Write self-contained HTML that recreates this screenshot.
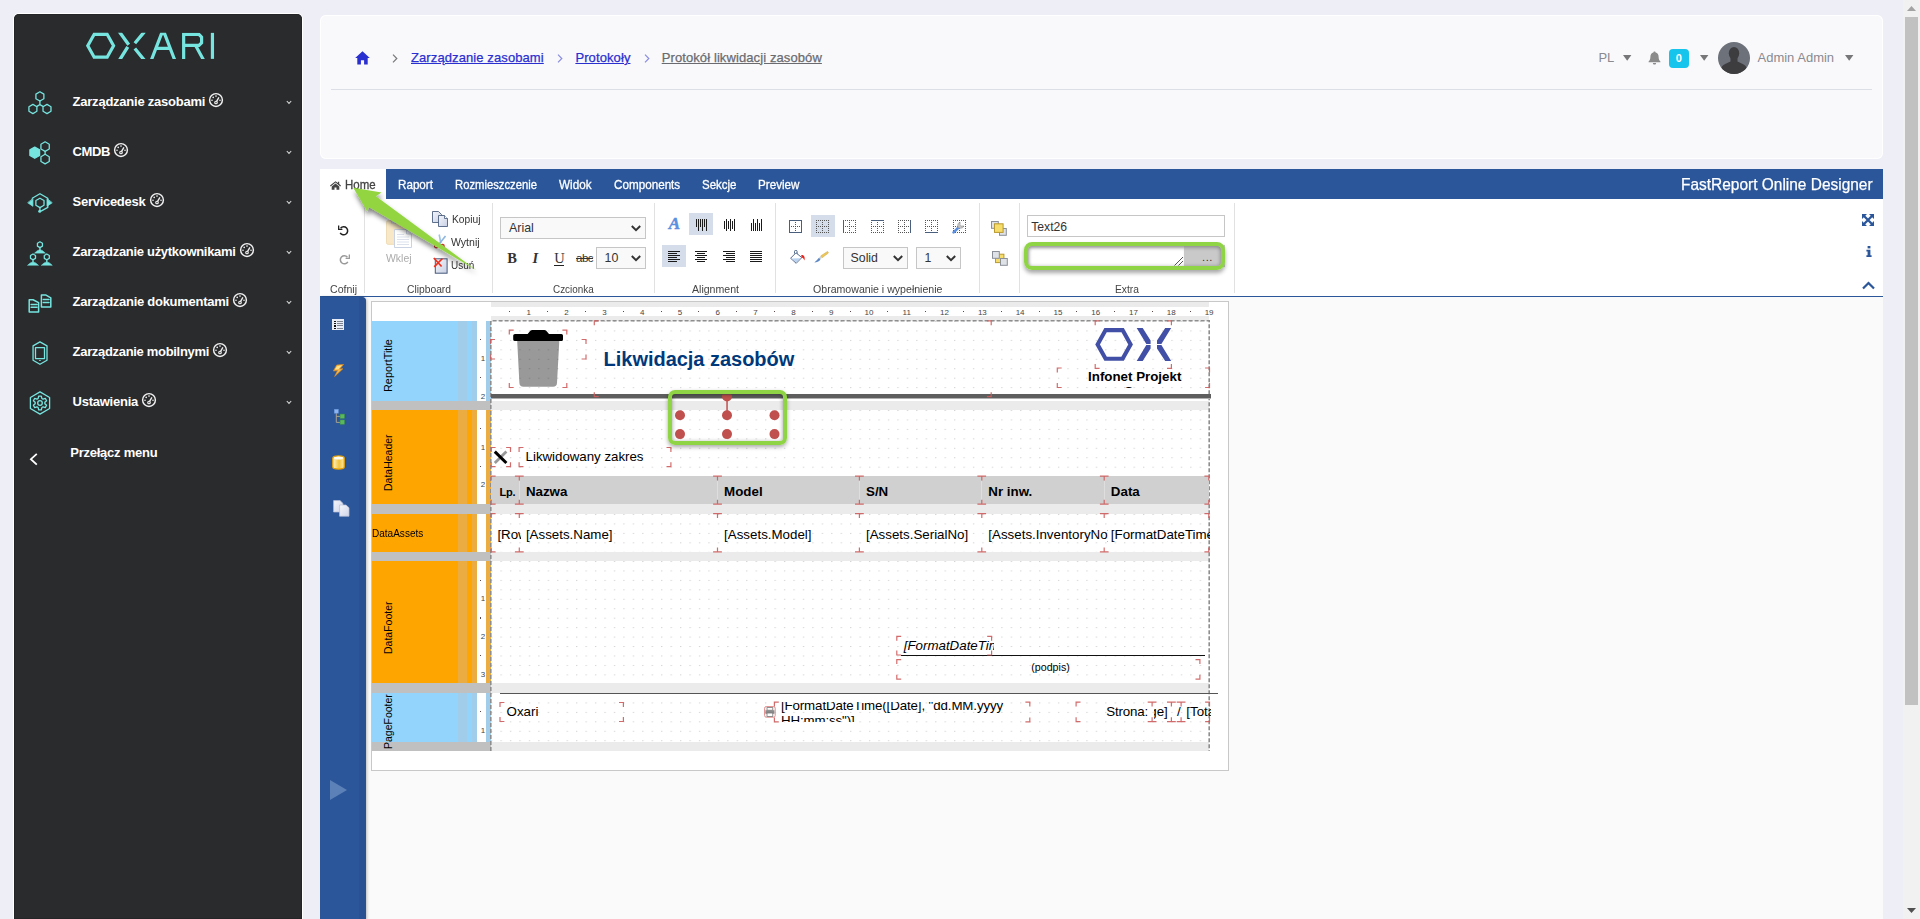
<!DOCTYPE html>
<html lang="pl">
<head>
<meta charset="utf-8">
<title>Oxari - FastReport Online Designer</title>
<style>
*{box-sizing:border-box;margin:0;padding:0}
html,body{width:1920px;height:919px;overflow:hidden;background:#eeeef7;font-family:"Liberation Sans",sans-serif;}
.abs{position:absolute}
/* ---------- sidebar ---------- */
#side{position:absolute;left:14px;top:14px;width:288px;height:905px;background:#2a2b2d;border-radius:5px 5px 0 0;box-shadow:0 0 0 1px #fff, inset 0 0 0 0.6px #1f2021}
.mi{position:absolute;left:0;width:288px;height:50px}
.mi .ic{position:absolute;left:12px;top:0}
.mi .tx{position:absolute;left:58.6px;top:0;color:#fff;font-weight:bold;font-size:13px;letter-spacing:-0.23px;white-space:nowrap;line-height:16px}
.tx2{position:absolute;left:56.2px;top:430.7px;color:#fff;font-weight:bold;font-size:13px;letter-spacing:-0.23px;white-space:nowrap;line-height:16px}
.mi .gg{position:absolute;top:0}
.mi .cv{position:absolute;left:272.2px;top:0}
/* ---------- top card ---------- */
#card{position:absolute;left:320px;top:15px;width:1563px;height:144.2px;background:#f9f9fb;border-radius:6px;box-shadow:inset 0 0 0 1px #fff}
#card .hr{position:absolute;left:11px;top:74px;width:1541px;height:1px;background:#dcdfe6}
.bc{position:absolute;top:34.7px;font-size:13px;line-height:16px;white-space:nowrap;letter-spacing:0.1px;text-decoration:underline;-webkit-text-stroke:0.25px currentColor}
.ut{position:absolute;top:34.5px;font-size:13px;line-height:16px;white-space:nowrap;color:#8a8a90}
.bc.l{color:#2a2fd0}
.bc.g{color:#6a6b70}
/* ---------- scrollbar ---------- */
#sb{position:absolute;left:1903px;top:0;width:17px;height:919px;background:#f1f1f1}
#sb .th{position:absolute;left:2px;top:17px;width:13px;height:688px;background:#c1c1c1}
/* ---------- designer ---------- */
#des{position:absolute;left:320px;top:169px;width:1563px;height:750px;background:#fafafa;overflow:hidden}
#tabs{position:absolute;left:0;top:0;width:1563px;height:30px;background:#2b579a}
#tabs .home{position:absolute;left:0;top:0;width:66px;height:30px;background:#fff}
.tb{position:absolute;top:8.6px;font-size:12.6px;line-height:14px;color:#fff;white-space:nowrap;transform-origin:0 50%;-webkit-text-stroke:0.3px currentColor}
#rib{position:absolute;left:0;top:30px;width:1563px;height:98px;background:#fff;border-bottom:1px solid #2b579a}
.sep{position:absolute;top:4px;width:1px;height:90px;background:#e1e1e1}
.gl{position:absolute;top:84px;font-size:11px;line-height:12px;color:#444;white-space:nowrap;transform-origin:0 50%}
.rl{position:absolute;font-size:11px;line-height:12px;color:#333;white-space:nowrap;transform-origin:0 50%}
.sel{position:absolute;border:1px solid #c6c6c6;background:#f9f9f9}
.sel span{position:absolute;line-height:14px;color:#333;white-space:nowrap}
.rn{position:absolute;width:16px;text-align:center;font-size:8px;line-height:9px;color:#444}
.vn{position:absolute;width:9px;text-align:center;font-size:8px;line-height:9px;color:#444}
.rd{position:absolute;width:1.1px;height:1.1px;background:#5a4a4a}
.bl{position:absolute;font-size:10.5px;line-height:12px;color:#000;white-space:nowrap}
.bl.v{transform-origin:0 0;transform:rotate(-90deg)}
.t{position:absolute;font-size:13.33px;line-height:16px;white-space:nowrap;color:#000}
#lp{position:absolute;left:0;top:128px;width:46px;height:623px;background:#2b579a;border-radius:0 5px 0 0;box-shadow:1px 0 3px rgba(0,0,0,.25)}
</style>
</head>
<body>
<!--SIDEBAR-->
<div id="side">
<svg class="abs" style="left:66px;top:11px" width="140" height="40" viewBox="0 0 1920 549" fill="none" stroke="#76e5e0" stroke-width="44"><polygon points="106,285 194,128 372,128 460,285 372,442 194,442"/><defs><clipPath id="lc"><rect x="0" y="108" width="1920" height="358"/></clipPath></defs><g clip-path="url(#lc)"><path d="M535 86 L668 272 M655 300 L537 489 M885 90 L752 250 M752 322 L885 486" stroke-width="46"/><path d="M968 509 L1118 118 H1160 L1310 509 M1050 322 H1232"/><path d="M1422 500 V130 H1632 L1668 166 V246 L1632 280 H1422 M1588 284 L1708 505"/></g><path d="M1817 108 V465"/></svg>
<div class="mi" style="top:62px"><svg class="ic" style="left:10px;top:10px" width="32" height="32" viewBox="0 0 32 32" fill="none" stroke="#76e5e0" stroke-width="1.3" stroke-linejoin="round" stroke-linecap="round"><polygon points="15.90,5.80 11.92,8.10 11.92,12.70 15.90,15.00 19.88,12.70 19.88,8.10"/><polygon points="8.90,18.40 4.92,20.70 4.92,25.30 8.90,27.60 12.88,25.30 12.88,20.70"/><polygon points="23.00,18.40 19.02,20.70 19.02,25.30 23.00,27.60 26.98,25.30 26.98,20.70"/><path d="M15.9 15 V18.6 M15.9 18.6 L12.9 20.4 M15.9 18.6 L19 20.4"/></svg><span class="tx" style="top:17.5px;letter-spacing:-0.234px">Zarządzanie zasobami</span><svg class="gg" width="16" height="16" viewBox="0 0 16 16" fill="none" stroke="#f2f2f2" stroke-width="1.45" style="left:194.3px;top:16px"><circle cx="8" cy="8" r="6.4"/><circle cx="8" cy="10.5" r="1.25" stroke-width="1.2"/><path d="M8.6 9.4 L10.9 5.4" stroke-width="1.35"/><g fill="#f2f2f2" stroke="none"><circle cx="8" cy="4.1" r="0.8"/><circle cx="5.2" cy="5.4" r="0.8"/><circle cx="4" cy="8.2" r="0.8"/><circle cx="12" cy="8.2" r="0.8"/></g></svg><svg class="cv" width="6" height="5" viewBox="0 0 6 5" fill="none" stroke="#d8d8d8" stroke-width="1.1" style="top:24.3px"><path d="M0.8 1 L3 3.4 L5.2 1"/></svg></div>
<div class="mi" style="top:112px"><svg class="ic" style="left:10px;top:10px" width="32" height="32" viewBox="0 0 32 32" fill="none" stroke="#76e5e0" stroke-width="1.3" stroke-linejoin="round" stroke-linecap="round"><polygon points="10.75,11.10 5.90,13.90 5.90,19.50 10.75,22.30 15.60,19.50 15.60,13.90" fill="#76e5e0"/><polygon points="21.10,5.80 16.94,8.20 16.94,13.00 21.10,15.40 25.26,13.00 25.26,8.20"/><polygon points="21.10,18.30 16.94,20.70 16.94,25.50 21.10,27.90 25.26,25.50 25.26,20.70"/><path d="M21.1 15.6 V18.1"/></svg><span class="tx" style="top:17.5px;letter-spacing:-0.425px">CMDB</span><svg class="gg" width="16" height="16" viewBox="0 0 16 16" fill="none" stroke="#f2f2f2" stroke-width="1.45" style="left:99.0px;top:16px"><circle cx="8" cy="8" r="6.4"/><circle cx="8" cy="10.5" r="1.25" stroke-width="1.2"/><path d="M8.6 9.4 L10.9 5.4" stroke-width="1.35"/><g fill="#f2f2f2" stroke="none"><circle cx="8" cy="4.1" r="0.8"/><circle cx="5.2" cy="5.4" r="0.8"/><circle cx="4" cy="8.2" r="0.8"/><circle cx="12" cy="8.2" r="0.8"/></g></svg><svg class="cv" width="6" height="5" viewBox="0 0 6 5" fill="none" stroke="#d8d8d8" stroke-width="1.1" style="top:24.3px"><path d="M0.8 1 L3 3.4 L5.2 1"/></svg></div>
<div class="mi" style="top:162px"><svg class="ic" style="left:10px;top:10px" width="32" height="32" viewBox="0 0 32 32" fill="none" stroke="#76e5e0" stroke-width="1.3" stroke-linejoin="round" stroke-linecap="round"><polygon points="15.95,12.20 11.88,14.55 11.88,19.25 15.95,21.60 20.02,19.25 20.02,14.55"/><path d="M8.2 12.2 L15.95 7.7 L23.8 12.2 V21.4 L17.5 24.9"/><path d="M8.9 12.9 V20.3 L4 16.9Z M23 12.9 V20.3 L27.9 16.9Z" fill="#76e5e0" stroke-width="0.8"/><path d="M15.95 21.7 V24.5"/><circle cx="15.7" cy="25.3" r="1.5" fill="#76e5e0" stroke="none"/></svg><span class="tx" style="top:17.5px;letter-spacing:-0.283px">Servicedesk</span><svg class="gg" width="16" height="16" viewBox="0 0 16 16" fill="none" stroke="#f2f2f2" stroke-width="1.45" style="left:134.5px;top:16px"><circle cx="8" cy="8" r="6.4"/><circle cx="8" cy="10.5" r="1.25" stroke-width="1.2"/><path d="M8.6 9.4 L10.9 5.4" stroke-width="1.35"/><g fill="#f2f2f2" stroke="none"><circle cx="8" cy="4.1" r="0.8"/><circle cx="5.2" cy="5.4" r="0.8"/><circle cx="4" cy="8.2" r="0.8"/><circle cx="12" cy="8.2" r="0.8"/></g></svg><svg class="cv" width="6" height="5" viewBox="0 0 6 5" fill="none" stroke="#d8d8d8" stroke-width="1.1" style="top:24.3px"><path d="M0.8 1 L3 3.4 L5.2 1"/></svg></div>
<div class="mi" style="top:212px"><svg class="ic" style="left:10px;top:10px" width="32" height="32" viewBox="0 0 32 32" fill="none" stroke="#76e5e0" stroke-width="1.3" stroke-linejoin="round" stroke-linecap="round"><polygon points="15.95,5.80 13.44,7.25 13.44,10.15 15.95,11.60 18.46,10.15 18.46,7.25"/><path d="M15.95 11.899999999999999 V13.7"/><path d="M10.75 16.9 Q13.45 13.899999999999999 15.95 13.7 Q18.45 13.899999999999999 21.15 16.9Z" fill="#76e5e0" stroke-width="0.6"/><polygon points="9.00,18.00 6.49,19.45 6.49,22.35 9.00,23.80 11.51,22.35 11.51,19.45"/><path d="M9.0 24.099999999999998 V25.9"/><path d="M3.8 29.099999999999998 Q6.5 26.099999999999998 9.0 25.9 Q11.5 26.099999999999998 14.2 29.099999999999998Z" fill="#76e5e0" stroke-width="0.6"/><polygon points="22.80,18.00 20.29,19.45 20.29,22.35 22.80,23.80 25.31,22.35 25.31,19.45"/><path d="M22.8 24.099999999999998 V25.9"/><path d="M17.6 29.099999999999998 Q20.3 26.099999999999998 22.8 25.9 Q25.3 26.099999999999998 28.0 29.099999999999998Z" fill="#76e5e0" stroke-width="0.6"/></svg><span class="tx" style="top:17.5px;letter-spacing:-0.300px">Zarządzanie użytkownikami</span><svg class="gg" width="16" height="16" viewBox="0 0 16 16" fill="none" stroke="#f2f2f2" stroke-width="1.45" style="left:224.7px;top:16px"><circle cx="8" cy="8" r="6.4"/><circle cx="8" cy="10.5" r="1.25" stroke-width="1.2"/><path d="M8.6 9.4 L10.9 5.4" stroke-width="1.35"/><g fill="#f2f2f2" stroke="none"><circle cx="8" cy="4.1" r="0.8"/><circle cx="5.2" cy="5.4" r="0.8"/><circle cx="4" cy="8.2" r="0.8"/><circle cx="12" cy="8.2" r="0.8"/></g></svg><svg class="cv" width="6" height="5" viewBox="0 0 6 5" fill="none" stroke="#d8d8d8" stroke-width="1.1" style="top:24.3px"><path d="M0.8 1 L3 3.4 L5.2 1"/></svg></div>
<div class="mi" style="top:262px"><svg class="ic" style="left:10px;top:10px" width="32" height="32" viewBox="0 0 32 32" fill="none" stroke="#76e5e0" stroke-width="1.3" stroke-linejoin="round" stroke-linecap="round"><path d="M17.4 8.9 H21.6 L26.8 11.8 V20.9 H17.4Z M19.3 13.6 H25 M19.3 16.4 H25" stroke-width="1.5"/><path d="M5.2 13.75 H9.05 L14.6 16.7 V25.9 H5.2Z M7.1 18.6 H13 M7.1 21.2 H13" stroke-width="1.5"/></svg><span class="tx" style="top:17.5px;letter-spacing:-0.276px">Zarządzanie dokumentami</span><svg class="gg" width="16" height="16" viewBox="0 0 16 16" fill="none" stroke="#f2f2f2" stroke-width="1.45" style="left:217.9px;top:16px"><circle cx="8" cy="8" r="6.4"/><circle cx="8" cy="10.5" r="1.25" stroke-width="1.2"/><path d="M8.6 9.4 L10.9 5.4" stroke-width="1.35"/><g fill="#f2f2f2" stroke="none"><circle cx="8" cy="4.1" r="0.8"/><circle cx="5.2" cy="5.4" r="0.8"/><circle cx="4" cy="8.2" r="0.8"/><circle cx="12" cy="8.2" r="0.8"/></g></svg><svg class="cv" width="6" height="5" viewBox="0 0 6 5" fill="none" stroke="#d8d8d8" stroke-width="1.1" style="top:24.3px"><path d="M0.8 1 L3 3.4 L5.2 1"/></svg></div>
<div class="mi" style="top:312px"><svg class="ic" style="left:10px;top:10px" width="32" height="32" viewBox="0 0 32 32" fill="none" stroke="#76e5e0" stroke-width="1.3" stroke-linejoin="round" stroke-linecap="round"><polygon points="15.95,5.9 23,9.9 23,24.3 15.95,28.3 9.05,24.3 9.05,9.9"/><rect x="11.5" y="11.7" width="9" height="10.9"/><ellipse cx="15.95" cy="24.5" rx="1" ry="0.5" fill="#76e5e0" stroke="none"/></svg><span class="tx" style="top:17.5px;letter-spacing:-0.317px">Zarządzanie mobilnymi</span><svg class="gg" width="16" height="16" viewBox="0 0 16 16" fill="none" stroke="#f2f2f2" stroke-width="1.45" style="left:198.1px;top:16px"><circle cx="8" cy="8" r="6.4"/><circle cx="8" cy="10.5" r="1.25" stroke-width="1.2"/><path d="M8.6 9.4 L10.9 5.4" stroke-width="1.35"/><g fill="#f2f2f2" stroke="none"><circle cx="8" cy="4.1" r="0.8"/><circle cx="5.2" cy="5.4" r="0.8"/><circle cx="4" cy="8.2" r="0.8"/><circle cx="12" cy="8.2" r="0.8"/></g></svg><svg class="cv" width="6" height="5" viewBox="0 0 6 5" fill="none" stroke="#d8d8d8" stroke-width="1.1" style="top:24.3px"><path d="M0.8 1 L3 3.4 L5.2 1"/></svg></div>
<div class="mi" style="top:362px"><svg class="ic" style="left:10px;top:10px" width="32" height="32" viewBox="0 0 32 32" fill="none" stroke="#76e5e0" stroke-width="1.3" stroke-linejoin="round" stroke-linecap="round"><polygon points="16.00,5.90 6.39,11.45 6.39,22.55 16.00,28.10 25.61,22.55 25.61,11.45"/><path d="M17.84 12.46 L17.34 10.13 L14.66 10.13 L14.16 12.46 L12.98 13.14 L10.72 12.41 L9.38 14.72 L11.15 16.32 L11.15 17.68 L9.38 19.28 L10.72 21.59 L12.98 20.86 L14.16 21.54 L14.66 23.87 L17.34 23.87 L17.84 21.54 L19.02 20.86 L21.28 21.59 L22.62 19.28 L20.85 17.68 L20.85 16.32 L22.62 14.72 L21.28 12.41 L19.02 13.14Z" stroke-width="1.3"/><circle cx="16" cy="17" r="2.3"/></svg><span class="tx" style="top:17.5px;letter-spacing:-0.252px">Ustawienia</span><svg class="gg" width="16" height="16" viewBox="0 0 16 16" fill="none" stroke="#f2f2f2" stroke-width="1.45" style="left:127.1px;top:16px"><circle cx="8" cy="8" r="6.4"/><circle cx="8" cy="10.5" r="1.25" stroke-width="1.2"/><path d="M8.6 9.4 L10.9 5.4" stroke-width="1.35"/><g fill="#f2f2f2" stroke="none"><circle cx="8" cy="4.1" r="0.8"/><circle cx="5.2" cy="5.4" r="0.8"/><circle cx="4" cy="8.2" r="0.8"/><circle cx="12" cy="8.2" r="0.8"/></g></svg><svg class="cv" width="6" height="5" viewBox="0 0 6 5" fill="none" stroke="#d8d8d8" stroke-width="1.1" style="top:24.3px"><path d="M0.8 1 L3 3.4 L5.2 1"/></svg></div>
<svg class="abs" style="left:14px;top:437px" width="12" height="16" viewBox="0 0 12 16" fill="none" stroke="#fff" stroke-width="1.8"><path d="M8.8 2.8 L2.9 8.2 L8.8 13.6"/></svg><span class="tx2">Przełącz menu</span>
</div>
<!--/SIDEBAR-->
<!--CARD-->
<div id="card">
<svg class="abs" style="left:34.5px;top:35.5px" width="15" height="14" viewBox="0 0 15 14"><path d="M7.5 0.3 L0.2 6.9 H2.3 V13.4 H5.9 V9.2 H9.1 V13.4 H12.7 V6.9 H14.8Z" fill="#2a2fd0"/></svg>
<svg class="abs" style="left:71.5px;top:38.5px" width="6" height="9" viewBox="0 0 6 9" fill="none" stroke="#77777c" stroke-width="1.2"><path d="M1 0.7 L4.8 4.5 L1 8.3"/></svg>
<span class="bc l" style="left:91px">Zarządzanie zasobami</span>
<svg class="abs" style="left:237px;top:38.5px" width="6" height="9" viewBox="0 0 6 9" fill="none" stroke="#8a8de0" stroke-width="1.2"><path d="M1 0.7 L4.8 4.5 L1 8.3"/></svg>
<span class="bc l" style="left:255.4px">Protokoły</span>
<svg class="abs" style="left:323.5px;top:38.5px" width="6" height="9" viewBox="0 0 6 9" fill="none" stroke="#8a8de0" stroke-width="1.2"><path d="M1 0.7 L4.8 4.5 L1 8.3"/></svg>
<span class="bc g" style="left:341.7px">Protokół likwidacji zasobów</span>
<div class="hr"></div>
<span class="ut" style="left:1278.4px">PL</span>
<svg class="abs" style="left:1303px;top:40px" width="9" height="6"><path d="M0 0 H8.4 L4.2 5.8Z" fill="#77777a"/></svg>
<svg class="abs" style="left:1328px;top:35.5px" width="13" height="14" viewBox="0 0 13 14"><path d="M6.5 0.4 C7.2 0.4 7.6 0.9 7.6 1.5 C9.6 2 10.6 3.7 10.6 5.8 C10.6 8.6 11.4 9.6 12.4 10.6 V11.3 H0.6 V10.6 C1.6 9.6 2.4 8.6 2.4 5.8 C2.4 3.7 3.4 2 5.4 1.5 C5.4 0.9 5.8 0.4 6.5 0.4Z M4.9 12 H8.1 C8.1 12.9 7.4 13.6 6.5 13.6 C5.6 13.6 4.9 12.9 4.9 12Z" fill="#8b8b8b"/></svg>
<div class="abs" style="left:1348.9px;top:34px;width:20px;height:19px;border-radius:4px;background:#16c4ec;color:#fff;font-weight:bold;font-size:11px;line-height:19px;text-align:center">0</div>
<svg class="abs" style="left:1380.2px;top:40px" width="9" height="6"><path d="M0 0 H8.4 L4.2 5.8Z" fill="#77777a"/></svg>
<svg class="abs" style="left:1398px;top:26.5px" width="32" height="32" viewBox="0 0 32 32"><defs><clipPath id="av"><circle cx="16" cy="16" r="16"/></clipPath></defs><circle cx="16" cy="16" r="16" fill="#6c717a"/><g clip-path="url(#av)" fill="#3d3d3f"><ellipse cx="16" cy="11.3" rx="5.2" ry="6.4"/><path d="M12.5 15 H19.5 V19.5 C22 21 27 22 28.5 25.5 L30 33 H2 L3.5 25.5 C5 22 10 21 12.5 19.5Z"/></g></svg>
<span class="ut" style="left:1437.5px">Admin Admin</span>
<svg class="abs" style="left:1525px;top:40px" width="9" height="6"><path d="M0 0 H8.4 L4.2 5.8Z" fill="#77777a"/></svg>
</div>
<!--/CARD-->
<!--DESIGNER-->
<div id="des">
<!--RIB-->
<div id="tabs"><div class="home"></div>
<svg class="abs" style="left:10.399999999999977px;top:11.599999999999994px" width="11" height="9" viewBox="0 0 11 9"><path d="M5.5 0.2 L0 4.6 L0.7 5.4 L5.5 1.6 L10.3 5.4 L11 4.6 L9.2 3.1 V0.8 H7.9 V2.1Z M5.5 2.5 L1.7 5.6 V8.8 H4.5 V6.4 H6.5 V8.8 H9.3 V5.6Z" fill="#444"/></svg>
<span class="tb" style="left:25.30px;color:#444;transform:scaleX(0.9101)">Home</span>
<span class="tb" style="left:78.00px;color:#fff;transform:scaleX(0.9252)">Raport</span>
<span class="tb" style="left:135.00px;color:#fff;transform:scaleX(0.8937)">Rozmieszczenie</span>
<span class="tb" style="left:239.00px;color:#fff;transform:scaleX(0.9284)">Widok</span>
<span class="tb" style="left:293.75px;color:#fff;transform:scaleX(0.9272)">Components</span>
<span class="tb" style="left:381.50px;color:#fff;transform:scaleX(0.9119)">Sekcje</span>
<span class="tb" style="left:437.50px;color:#fff;transform:scaleX(0.9258)">Preview</span>
<span class="abs" style="left:1361px;top:5px;font-size:16.5px;line-height:20px;color:#fff;white-space:nowrap;transform-origin:0 50%;-webkit-text-stroke:0.25px #fff;transform:scaleX(0.9369)">FastReport Online Designer</span>
</div>
<div id="rib">
<div class="sep" style="left:44.0px"></div>
<div class="sep" style="left:171.5px"></div>
<div class="sep" style="left:334.0px"></div>
<div class="sep" style="left:455.0px"></div>
<div class="sep" style="left:658.5px"></div>
<div class="sep" style="left:698.8px"></div>
<div class="sep" style="left:914.0px"></div>
<span class="gl" style="left:10.00px;transform:scaleX(0.9602)">Cofnij</span>
<span class="gl" style="left:86.50px;transform:scaleX(0.9344)">Clipboard</span>
<span class="gl" style="left:233.00px;transform:scaleX(0.9006)">Czcionka</span>
<span class="gl" style="left:371.50px;transform:scaleX(0.9608)">Alignment</span>
<span class="gl" style="left:493.00px;transform:scaleX(0.9627)">Obramowanie i wypełnienie</span>
<span class="gl" style="left:795.00px;transform:scaleX(0.9342)">Extra</span>
<svg class="abs" style="left:18.00px;top:26.00px" width="12" height="11" viewBox="0 0 12 11" fill="none" stroke="#222" stroke-width="1.5"><path d="M2.6 3.2 A4 4 0 1 1 2.2 7.8"/><path d="M0.6 0.6 V4.4 H4.4" fill="none" stroke-width="1.4"/></svg>
<svg class="abs" style="left:18.00px;top:55.00px" width="12" height="11" viewBox="0 0 12 11" fill="none" stroke="#9a9a9a" stroke-width="1.5"><path d="M9.4 3.2 A4 4 0 1 0 9.8 7.8"/><path d="M11.4 0.6 V4.4 H7.6" fill="none" stroke-width="1.4"/></svg>
<svg class="abs" style="left:66.00px;top:20.00px" width="27" height="30" viewBox="0 0 27 30" opacity="0.55"><rect x="0.5" y="1.8" width="20" height="23.5" rx="1.5" fill="#f3d79a" stroke="#e0c07a"/><rect x="5.5" y="0.5" width="10" height="3.6" fill="#c9ccd6" stroke="#9aa0b0" stroke-width="0.6"/><path d="M8.5 10.5 H20.5 L25.5 15 V28.5 H8.5Z" fill="#fff" stroke="#9fb0cf"/><path d="M20.5 10.5 V15 H25.5" fill="#e4e9f4" stroke="#9fb0cf"/><path d="M11 15.5 H18 M11 18 H23 M11 20.5 H23 M11 23 H23 M11 25.5 H23" stroke="#b9c4da" stroke-width="0.9"/></svg>
<span class="rl" style="left:65.90px;top:53.00px;color:#ababab;transform:scaleX(0.9483)">Wklej</span>
<svg class="abs" style="left:112.00px;top:12.00px" width="16" height="16" viewBox="0 0 16 16"><defs><linearGradient id="pg" x1="0" y1="0" x2="1" y2="1"><stop offset="0" stop-color="#f4f6fb"/><stop offset="1" stop-color="#c9d0e4"/></linearGradient></defs><path d="M0.5 0.5 H6.5 L9.5 3.5 V11.5 H0.5Z" fill="url(#pg)" stroke="#44587a" stroke-width="0.85"/><path d="M6.5 4.5 H12.5 L15.5 7.5 V15.5 H6.5Z" fill="url(#pg)" stroke="#44587a" stroke-width="0.85"/><path d="M12.5 4.5 V7.5 H15.5" fill="#fff" stroke="#44587a" stroke-width="0.8"/></svg>
<span class="rl" style="left:131.50px;top:14.20px;transform:scaleX(0.9287)">Kopiuj</span>
<svg class="abs" style="left:113.00px;top:35.00px" width="15" height="15" viewBox="0 0 15 15" fill="none"><path d="M6.2 0.5 L7.8 9" stroke="#9fc3e6" stroke-width="1.6"/><path d="M12.5 2 L6.2 10" stroke="#8fb6de" stroke-width="1.6"/><circle cx="3.3" cy="12" r="1.8" stroke="#d0342a" stroke-width="1.3"/><circle cx="9.4" cy="12.3" r="1.8" stroke="#d0342a" stroke-width="1.3"/></svg>
<span class="rl" style="left:131.20px;top:37.20px;transform:scaleX(0.9578)">Wytnij</span>
<svg class="abs" style="left:112.50px;top:57.50px" width="16" height="17" viewBox="0 0 16 17"><rect x="2.3" y="1.8" width="11.8" height="14.4" fill="url(#pg)" stroke="#44587a"/><path d="M0.8 1 L8.6 9.5 M9.4 1.5 L1.2 9.8" stroke="#f0301c" stroke-width="1.7"/></svg>
<span class="rl" style="left:131.20px;top:60.40px;transform:scaleX(0.9070)">Usuń</span>
<div class="sel" style="left:180.00px;top:18.00px;width:146px;height:22px"><span style="left:8px;top:3px;font-size:12.4px">Arial</span><svg class="abs" style="right:4.2px;top:7.2px" width="10" height="7" viewBox="0 0 10 7" fill="none" stroke="#333" stroke-width="2"><path d="M0.8 1 L5 5.2 L9.2 1"/></svg></div>
<span class="abs" style="left:187.20px;top:51.20px;font-family:'Liberation Serif',serif;font-weight:bold;font-size:14.5px;line-height:17px;color:#333">B</span>
<span class="abs" style="left:212.50px;top:51.20px;font-family:'Liberation Serif',serif;font-weight:bold;font-style:italic;font-size:14.5px;line-height:17px;color:#333">I</span>
<span class="abs" style="left:234.20px;top:51.00px;font-family:'Liberation Serif',serif;font-size:14.5px;line-height:17px;color:#333;width:10px;height:16px;border-bottom:1px solid #222;">U</span>
<span class="abs" style="left:256.00px;top:51.60px;font-size:11.5px;line-height:14px;color:#333;text-decoration:line-through;letter-spacing:-0.5px">abc</span>
<div class="sel" style="left:276.00px;top:48.00px;width:50px;height:22px"><span style="left:7.6px;top:3px;font-size:12.4px">10</span><svg class="abs" style="right:4.2px;top:7.2px" width="10" height="7" viewBox="0 0 10 7" fill="none" stroke="#333" stroke-width="2"><path d="M0.8 1 L5 5.2 L9.2 1"/></svg></div>
<div class="abs" style="left:369.00px;top:14.00px;width:24px;height:22px;background:#d5dcea"></div>
<div class="abs" style="left:342.00px;top:46.00px;width:24px;height:22px;background:#d5dcea"></div>
<span class="abs" style="left:348.80px;top:14.60px;font-family:'Liberation Serif',serif;font-weight:bold;font-style:italic;font-size:17px;line-height:20px;color:#5b8fe0;-webkit-text-stroke:0.5px #5b8fe0">A</span>
<div class="abs" style="left:376px;top:20px;width:1px;height:8px;background:#1a1a1a"></div><div class="abs" style="left:378px;top:20px;width:1px;height:12px;background:#1a1a1a"></div><div class="abs" style="left:380px;top:20px;width:1px;height:8px;background:#1a1a1a"></div><div class="abs" style="left:382px;top:20px;width:1px;height:12px;background:#1a1a1a"></div><div class="abs" style="left:384px;top:20px;width:1px;height:8px;background:#1a1a1a"></div><div class="abs" style="left:386px;top:20px;width:1px;height:12px;background:#1a1a1a"></div>
<div class="abs" style="left:404px;top:22px;width:1px;height:8px;background:#1a1a1a"></div><div class="abs" style="left:406px;top:20px;width:1px;height:12px;background:#1a1a1a"></div><div class="abs" style="left:408px;top:22px;width:1px;height:8px;background:#1a1a1a"></div><div class="abs" style="left:410px;top:20px;width:1px;height:12px;background:#1a1a1a"></div><div class="abs" style="left:412px;top:22px;width:1px;height:8px;background:#1a1a1a"></div><div class="abs" style="left:414px;top:20px;width:1px;height:12px;background:#1a1a1a"></div>
<div class="abs" style="left:431px;top:24px;width:1px;height:8px;background:#1a1a1a"></div><div class="abs" style="left:433px;top:20px;width:1px;height:12px;background:#1a1a1a"></div><div class="abs" style="left:435px;top:24px;width:1px;height:8px;background:#1a1a1a"></div><div class="abs" style="left:437px;top:20px;width:1px;height:12px;background:#1a1a1a"></div><div class="abs" style="left:439px;top:24px;width:1px;height:8px;background:#1a1a1a"></div><div class="abs" style="left:441px;top:20px;width:1px;height:12px;background:#1a1a1a"></div>
<div class="abs" style="left:348px;top:52px;width:12px;height:1px;background:#1a1a1a"></div><div class="abs" style="left:348px;top:54px;width:9px;height:1px;background:#1a1a1a"></div><div class="abs" style="left:348px;top:56px;width:12px;height:1px;background:#1a1a1a"></div><div class="abs" style="left:348px;top:58px;width:9px;height:1px;background:#1a1a1a"></div><div class="abs" style="left:348px;top:60px;width:12px;height:1px;background:#1a1a1a"></div><div class="abs" style="left:348px;top:62px;width:9px;height:1px;background:#1a1a1a"></div>
<div class="abs" style="left:375px;top:52px;width:12px;height:1px;background:#1a1a1a"></div><div class="abs" style="left:377px;top:54px;width:8px;height:1px;background:#1a1a1a"></div><div class="abs" style="left:375px;top:56px;width:12px;height:1px;background:#1a1a1a"></div><div class="abs" style="left:377px;top:58px;width:8px;height:1px;background:#1a1a1a"></div><div class="abs" style="left:375px;top:60px;width:12px;height:1px;background:#1a1a1a"></div><div class="abs" style="left:377px;top:62px;width:8px;height:1px;background:#1a1a1a"></div>
<div class="abs" style="left:403px;top:52px;width:12px;height:1px;background:#1a1a1a"></div><div class="abs" style="left:406px;top:54px;width:9px;height:1px;background:#1a1a1a"></div><div class="abs" style="left:403px;top:56px;width:12px;height:1px;background:#1a1a1a"></div><div class="abs" style="left:406px;top:58px;width:9px;height:1px;background:#1a1a1a"></div><div class="abs" style="left:403px;top:60px;width:12px;height:1px;background:#1a1a1a"></div><div class="abs" style="left:406px;top:62px;width:9px;height:1px;background:#1a1a1a"></div>
<div class="abs" style="left:430px;top:52px;width:12px;height:1px;background:#1a1a1a"></div><div class="abs" style="left:430px;top:54px;width:12px;height:1px;background:#1a1a1a"></div><div class="abs" style="left:430px;top:56px;width:12px;height:1px;background:#1a1a1a"></div><div class="abs" style="left:430px;top:58px;width:12px;height:1px;background:#1a1a1a"></div><div class="abs" style="left:430px;top:60px;width:12px;height:1px;background:#1a1a1a"></div><div class="abs" style="left:430px;top:62px;width:12px;height:1px;background:#1a1a1a"></div>
<div class="abs" style="left:491.00px;top:16.00px;width:24px;height:22px;background:#d5dcea"></div>
<svg class="abs" style="left:469.00px;top:21.00px" width="13" height="13" viewBox="0 0 13 13" shape-rendering="crispEdges"><path d="M0 .5H13M0 6.5H13M0 12.5H13M.5 0V13M6.5 0V13M12.5 0V13" stroke="#555" stroke-dasharray="1 1" fill="none"/><rect x="0.5" y="0.5" width="12" height="12" fill="none" stroke="#4a5f7c" stroke-width="1"/></svg>
<svg class="abs" style="left:496.00px;top:21.00px" width="13" height="13" viewBox="0 0 13 13" shape-rendering="crispEdges"><path d="M0 .5H13M0 6.5H13M0 12.5H13M.5 0V13M6.5 0V13M12.5 0V13" stroke="#555" stroke-dasharray="1 1" fill="none"/></svg>
<svg class="abs" style="left:523.00px;top:21.00px" width="13" height="13" viewBox="0 0 13 13" shape-rendering="crispEdges"><path d="M0 .5H13M0 6.5H13M0 12.5H13M.5 0V13M6.5 0V13M12.5 0V13" stroke="#555" stroke-dasharray="1 1" fill="none"/><rect x="0" y="0" width="1" height="13" fill="#4a5f7c"/></svg>
<svg class="abs" style="left:551.00px;top:21.00px" width="13" height="13" viewBox="0 0 13 13" shape-rendering="crispEdges"><path d="M0 .5H13M0 6.5H13M0 12.5H13M.5 0V13M6.5 0V13M12.5 0V13" stroke="#555" stroke-dasharray="1 1" fill="none"/><rect x="0" y="0" width="13" height="1" fill="#4a5f7c"/></svg>
<svg class="abs" style="left:578.00px;top:21.00px" width="13" height="13" viewBox="0 0 13 13" shape-rendering="crispEdges"><path d="M0 .5H13M0 6.5H13M0 12.5H13M.5 0V13M6.5 0V13M12.5 0V13" stroke="#555" stroke-dasharray="1 1" fill="none"/><rect x="12" y="0" width="1" height="13" fill="#4a5f7c"/></svg>
<svg class="abs" style="left:605.00px;top:21.00px" width="13" height="13" viewBox="0 0 13 13" shape-rendering="crispEdges"><path d="M0 .5H13M0 6.5H13M0 12.5H13M.5 0V13M6.5 0V13M12.5 0V13" stroke="#555" stroke-dasharray="1 1" fill="none"/><rect x="0" y="12" width="13" height="1" fill="#4a5f7c"/></svg>
<svg class="abs" style="left:633.00px;top:21.00px" width="13" height="13" viewBox="0 0 13 13" shape-rendering="crispEdges"><path d="M0 .5H13M0 6.5H13M0 12.5H13M.5 0V13M6.5 0V13M12.5 0V13" stroke="#555" stroke-dasharray="1 1" fill="none"/></svg>
<svg class="abs" style="left:632.00px;top:22.00px" width="13" height="13" viewBox="0 0 13 13"><path d="M1.6 11.4 L7 6" stroke="#5b8fe0" stroke-width="2.6" stroke-linecap="round"/><path d="M6.2 6.8 L8 5" stroke="#bbb" stroke-width="2.2"/><path d="M8.2 1.4 A3 3 0 1 0 11.6 4.8 L9.6 5.2 L8 3.6Z" fill="#c4c4c4" stroke="#9a9a9a" stroke-width="0.6"/></svg>
<svg class="abs" style="left:469.50px;top:50.50px" width="16" height="14" viewBox="0 0 16 14"><path d="M4.5 3.6 V1.6 A1.3 1.3 0 0 1 7.1 1.6 V5.5" fill="none" stroke="#3f5a80" stroke-width="0.9"/><path d="M6 2.8 L11.8 7.6 L6.2 13.3 L0.6 8.2Z" fill="#fff" stroke="#3f5a80" stroke-width="0.9"/><path d="M1.6 8.6 L6.2 12.6 L10.6 8.2Z" fill="#b9d2ef"/><path d="M11.2 5.2 C13.6 4.6 15.4 6.8 14.4 10.4 C13.6 8.4 12.8 7.6 11.6 7.4Z" fill="#e8231a"/></svg>
<svg class="abs" style="left:493.50px;top:51.50px" width="15" height="12" viewBox="0 0 15 12"><path d="M13.6 0.4 L14.4 2 L8 6.8 L6.6 5Z" fill="#edc858" stroke="#c9a03a" stroke-width="0.5"/><path d="M6.6 5 L8 6.8 L6.4 8.4 L5 6.8Z" fill="#cfd3da"/><path d="M5 6.8 L6.4 8.4 C5 10.6 2.6 11.4 0.4 11.4 C2.2 10 3.4 8.4 5 6.8Z" fill="#5c86c4"/></svg>
<div class="sel" style="left:523.00px;top:48.00px;width:65px;height:22px"><span style="left:6.6px;top:3px;font-size:12.3px">Solid</span><svg class="abs" style="right:4.2px;top:7.2px" width="10" height="7" viewBox="0 0 10 7" fill="none" stroke="#333" stroke-width="2"><path d="M0.8 1 L5 5.2 L9.2 1"/></svg></div>
<div class="sel" style="left:596.00px;top:48.00px;width:45px;height:22px"><span style="left:7.4px;top:3px;font-size:12.3px">1</span><svg class="abs" style="right:4.2px;top:7.2px" width="10" height="7" viewBox="0 0 10 7" fill="none" stroke="#333" stroke-width="2"><path d="M0.8 1 L5 5.2 L9.2 1"/></svg></div>
<svg class="abs" style="left:670.50px;top:21.50px" width="16" height="15" viewBox="0 0 16 15"><rect x="0.5" y="0.5" width="6.8" height="6.8" fill="#dfe2e6" stroke="#8a8f98"/><rect x="8.5" y="7.5" width="6.8" height="6.8" fill="#dfe2e6" stroke="#8a8f98"/><rect x="3.5" y="2.8" width="8.6" height="8.6" fill="#f6dc6a" stroke="#b99a2e"/></svg>
<svg class="abs" style="left:671.80px;top:51.80px" width="16" height="15" viewBox="0 0 16 15"><rect x="3.5" y="3.2" width="8.4" height="8.4" fill="#f6dc6a" stroke="#b99a2e"/><rect x="0.5" y="0.5" width="6.8" height="6.8" fill="#dfe2e6" stroke="#8a8f98"/><rect x="8.5" y="7.5" width="6.8" height="6.8" fill="#dfe2e6" stroke="#8a8f98"/></svg>
<div class="abs" style="left:707.00px;top:16.00px;width:198px;height:22px;border:1px solid #c6c6c6;background:#fff"><span class="abs" style="left:3.2px;top:3.9px;font-size:12.2px;line-height:14px;color:#333;white-space:nowrap">Text26</span></div>
<div class="abs" style="left:707.00px;top:46.00px;width:158px;height:22px;border:1px solid #c6c6c6;background:#fff;box-shadow:inset 1px 2px 3px rgba(0,0,0,.18)"></div>
<div class="abs" style="left:864.00px;top:46.00px;width:41px;height:22px;background:#c9c9c9"></div>
<span class="abs" style="left:882.00px;top:51.50px;font-size:11px;line-height:12px;color:#333;letter-spacing:0.6px">...</span>
<svg class="abs" style="left:854.00px;top:57.00px" width="10" height="10" viewBox="0 0 10 10" stroke="#444" stroke-width="0.9"><path d="M0.5 9.5 L9 1 M4.5 9.5 L9 5"/></svg>
<div class="abs" style="left:703.60px;top:43.20px;width:201.4px;height:27.5px;border:4.4px solid #8fd444;border-radius:8px;box-shadow:0 3px 4px rgba(0,0,0,.35), inset 0 1px 4px rgba(0,0,0,.4)"></div>
<svg class="abs" style="left:1542.00px;top:15.00px" width="12" height="12" viewBox="0 0 12 12" fill="#2b579a"><path d="M0 0 H5 L0 5Z M12 0 V5 L7 0Z M0 12 V7 L5 12Z M12 12 H7 L12 7Z"/><path d="M2 2 L10 10 M10 2 L2 10" stroke="#2b579a" stroke-width="2.3"/></svg>
<svg class="abs" style="left:1545.60px;top:47.00px" width="6" height="11" viewBox="0 0 6 11" fill="#2b579a"><rect x="1.6" y="0" width="2.8" height="2.4"/><path d="M0.4 3.8 H4.4 V9.2 H5.6 V11 H0.4 V9.2 H1.6 V5.6 H0.4Z"/></svg>
<svg class="abs" style="left:1541.60px;top:82.00px" width="13" height="9" viewBox="0 0 13 9" fill="none" stroke="#2b579a" stroke-width="2.2"><path d="M1 7.6 L6.5 2 L12 7.6"/></svg>
</div>
<svg class="abs" style="left:0;top:0;overflow:visible" width="200" height="130"><defs><filter id="ash" x="-20%" y="-20%" width="150%" height="160%"><feGaussianBlur in="SourceAlpha" stdDeviation="2.4"/><feOffset dx="1" dy="3.5"/><feComponentTransfer><feFuncA type="linear" slope="0.5"/></feComponentTransfer><feMerge><feMergeNode/><feMergeNode in="SourceGraphic"/></feMerge></filter></defs><polygon points="33.25,18.70 61.55,23.40 55.90,27.20 156.40,101.20 48.80,38.10 47.40,42.70" fill="#92d541" filter="url(#ash)"/></svg>
<!--/RIB-->
<!--CANVAS-->
<svg class="abs" width="0" height="0"><defs><pattern id="gp" width="9.449" height="9.449" patternUnits="userSpaceOnUse"><rect x="0" y="0" width="1.3" height="1" fill="#d2d2d2"/></pattern></defs></svg>
<div class="abs" style="left:51.00px;top:132.00px;width:858.00px;height:470.00px;background:#fff;border:1px solid #c8c8c8"></div>
<div class="abs" style="left:171.00px;top:133.00px;width:718.00px;height:18.80px;background:#ebebeb"></div>
<div class="abs" style="left:171.00px;top:138.00px;width:718.00px;height:9.40px;background:#fff"></div>
<span class="rn" style="left:200.79px;top:138.80px">1</span>
<span class="rn" style="left:238.59px;top:138.80px">2</span>
<span class="rn" style="left:276.38px;top:138.80px">3</span>
<span class="rn" style="left:314.18px;top:138.80px">4</span>
<span class="rn" style="left:351.98px;top:138.80px">5</span>
<span class="rn" style="left:389.77px;top:138.80px">6</span>
<span class="rn" style="left:427.57px;top:138.80px">7</span>
<span class="rn" style="left:465.36px;top:138.80px">8</span>
<span class="rn" style="left:503.15px;top:138.80px">9</span>
<span class="rn" style="left:540.95px;top:138.80px">10</span>
<span class="rn" style="left:578.75px;top:138.80px">11</span>
<span class="rn" style="left:616.54px;top:138.80px">12</span>
<span class="rn" style="left:654.34px;top:138.80px">13</span>
<span class="rn" style="left:692.13px;top:138.80px">14</span>
<span class="rn" style="left:729.93px;top:138.80px">15</span>
<span class="rn" style="left:767.72px;top:138.80px">16</span>
<span class="rn" style="left:805.51px;top:138.80px">17</span>
<span class="rn" style="left:843.31px;top:138.80px">18</span>
<span class="rn" style="left:881.11px;top:138.80px">19</span>
<i class="rd" style="left:189.40px;top:142.00px"></i>
<i class="rd" style="left:227.19px;top:142.00px"></i>
<i class="rd" style="left:264.99px;top:142.00px"></i>
<i class="rd" style="left:302.78px;top:142.00px"></i>
<i class="rd" style="left:340.58px;top:142.00px"></i>
<i class="rd" style="left:378.37px;top:142.00px"></i>
<i class="rd" style="left:416.17px;top:142.00px"></i>
<i class="rd" style="left:453.96px;top:142.00px"></i>
<i class="rd" style="left:491.76px;top:142.00px"></i>
<i class="rd" style="left:529.55px;top:142.00px"></i>
<i class="rd" style="left:567.35px;top:142.00px"></i>
<i class="rd" style="left:605.14px;top:142.00px"></i>
<i class="rd" style="left:642.94px;top:142.00px"></i>
<i class="rd" style="left:680.73px;top:142.00px"></i>
<i class="rd" style="left:718.53px;top:142.00px"></i>
<i class="rd" style="left:756.32px;top:142.00px"></i>
<i class="rd" style="left:794.12px;top:142.00px"></i>
<i class="rd" style="left:831.91px;top:142.00px"></i>
<i class="rd" style="left:869.71px;top:142.00px"></i>
<div class="abs" style="left:52.00px;top:151.80px;width:119.00px;height:80.70px;background:#93d4fc"></div>
<div class="abs" style="left:138.00px;top:151.80px;width:8.80px;height:80.70px;background:#a1cdea"></div>
<div class="abs" style="left:152.10px;top:151.80px;width:4.90px;height:80.70px;background:#a1cdea"></div>
<div class="abs" style="left:157.00px;top:151.80px;width:9.00px;height:80.70px;background:#fff"></div>
<div class="abs" style="left:166.00px;top:151.80px;width:5.00px;height:80.70px;background:#a1cdea"></div>
<svg class="abs" style="left:171.00px;top:151.80px" width="718" height="79.7"><rect width="718" height="79.7" fill="url(#gp)"/></svg>
<span class="vn" style="left:158.40px;top:184.90px">1</span>
<span class="vn" style="left:158.40px;top:222.69px">2</span>
<i class="rd" style="left:160.20px;top:170.20px"></i>
<i class="rd" style="left:160.20px;top:207.99px"></i>
<div class="abs" style="left:52.00px;top:239.60px;width:119.00px;height:96.40px;background:#ffa500"></div>
<div class="abs" style="left:138.00px;top:239.60px;width:8.80px;height:96.40px;background:#ebac42"></div>
<div class="abs" style="left:152.10px;top:239.60px;width:4.90px;height:96.40px;background:#ebac42"></div>
<div class="abs" style="left:157.00px;top:239.60px;width:9.00px;height:96.40px;background:#fff"></div>
<div class="abs" style="left:166.00px;top:239.60px;width:5.00px;height:96.40px;background:#ebac42"></div>
<svg class="abs" style="left:171.00px;top:240.60px" width="718" height="94.4"><rect width="718" height="94.4" fill="url(#gp)"/></svg>
<span class="vn" style="left:158.40px;top:273.70px">1</span>
<span class="vn" style="left:158.40px;top:311.49px">2</span>
<i class="rd" style="left:160.20px;top:259.00px"></i>
<i class="rd" style="left:160.20px;top:296.79px"></i>
<div class="abs" style="left:52.00px;top:343.50px;width:119.00px;height:40.50px;background:#ffa500"></div>
<div class="abs" style="left:138.00px;top:343.50px;width:8.80px;height:40.50px;background:#ebac42"></div>
<div class="abs" style="left:152.10px;top:343.50px;width:4.90px;height:40.50px;background:#ebac42"></div>
<div class="abs" style="left:157.00px;top:343.50px;width:9.00px;height:40.50px;background:#fff"></div>
<div class="abs" style="left:166.00px;top:343.50px;width:5.00px;height:40.50px;background:#ebac42"></div>
<svg class="abs" style="left:171.00px;top:344.50px" width="718" height="38.5"><rect width="718" height="38.5" fill="url(#gp)"/></svg>
<span class="bl" style="left:52.40px;top:357.60px;transform-origin:0 50%;transform:scaleX(0.955)">DataAssets</span>
<div class="abs" style="left:52.00px;top:391.30px;width:119.00px;height:124.10px;background:#ffa500"></div>
<div class="abs" style="left:138.00px;top:391.30px;width:8.80px;height:124.10px;background:#ebac42"></div>
<div class="abs" style="left:152.10px;top:391.30px;width:4.90px;height:124.10px;background:#ebac42"></div>
<div class="abs" style="left:157.00px;top:391.30px;width:9.00px;height:124.10px;background:#fff"></div>
<div class="abs" style="left:166.00px;top:391.30px;width:5.00px;height:124.10px;background:#ebac42"></div>
<svg class="abs" style="left:171.00px;top:392.30px" width="718" height="122.1"><rect width="718" height="122.1" fill="url(#gp)"/></svg>
<span class="vn" style="left:158.40px;top:425.39px">1</span>
<span class="vn" style="left:158.40px;top:463.19px">2</span>
<span class="vn" style="left:158.40px;top:500.98px">3</span>
<i class="rd" style="left:160.20px;top:410.70px"></i>
<i class="rd" style="left:160.20px;top:448.49px"></i>
<i class="rd" style="left:160.20px;top:486.29px"></i>
<div class="abs" style="left:52.00px;top:523.00px;width:119.00px;height:50.90px;background:#93d4fc"></div>
<div class="abs" style="left:138.00px;top:523.00px;width:8.80px;height:50.90px;background:#a1cdea"></div>
<div class="abs" style="left:152.10px;top:523.00px;width:4.90px;height:50.90px;background:#a1cdea"></div>
<div class="abs" style="left:157.00px;top:523.00px;width:9.00px;height:50.90px;background:#fff"></div>
<div class="abs" style="left:166.00px;top:523.00px;width:5.00px;height:50.90px;background:#a1cdea"></div>
<svg class="abs" style="left:171.00px;top:524.00px" width="718" height="48.9"><rect width="718" height="48.9" fill="url(#gp)"/></svg>
<span class="vn" style="left:158.40px;top:557.09px">1</span>
<i class="rd" style="left:160.20px;top:542.40px"></i>
<div class="abs" style="left:52.00px;top:231.50px;width:119.00px;height:9.10px;background:#c0c0c0"></div>
<div class="abs" style="left:171.00px;top:231.50px;width:718.00px;height:9.10px;background:#ebebeb"></div>
<div class="abs" style="left:52.00px;top:335.00px;width:119.00px;height:9.50px;background:#c0c0c0"></div>
<div class="abs" style="left:171.00px;top:335.00px;width:718.00px;height:9.50px;background:#ebebeb"></div>
<div class="abs" style="left:52.00px;top:383.00px;width:119.00px;height:9.30px;background:#c0c0c0"></div>
<div class="abs" style="left:171.00px;top:383.00px;width:718.00px;height:9.30px;background:#ebebeb"></div>
<div class="abs" style="left:52.00px;top:514.40px;width:119.00px;height:9.60px;background:#c0c0c0"></div>
<div class="abs" style="left:171.00px;top:514.40px;width:718.00px;height:9.60px;background:#ebebeb"></div>
<div class="abs" style="left:52.00px;top:572.90px;width:119.00px;height:9.10px;background:#c0c0c0"></div>
<div class="abs" style="left:171.00px;top:572.90px;width:718.00px;height:9.10px;background:#ebebeb"></div>
<span class="bl v" style="left:61.70px;top:222.50px;font-size:10.9px">ReportTitle</span>
<span class="bl v" style="left:61.70px;top:321.80px">DataHeader</span>
<span class="bl v" style="left:61.70px;top:485.20px">DataFooter</span>
<span class="bl v" style="left:61.70px;top:580.00px">PageFooter</span>
<svg class="abs" style="left:169.00px;top:150.00px" width="724" height="434" fill="none" stroke="#8e8e8e" stroke-width="1.6" stroke-dasharray="4 2"><path d="M1.8 432 V1.8 H720.2 V432"/></svg>
<svg class="abs" style="left:189.00px;top:160.00px" width="60" height="60" viewBox="509 329 60 60"><path d="M515 334 H527.6 L530.6 330.6 Q531.2 330 532.2 330 H544.4 Q545.4 330 546 330.6 L549 334 H561.4 Q563 334 563 335.6 V339.4 Q563 341 561.4 341 H515 Q513.2 341 513.2 339.4 V335.6 Q513.2 334 515 334Z" fill="#000"/><path d="M517.2 341 H559.3 L557 383 Q556.8 386.8 553 386.8 H523.4 Q519.6 386.8 519.4 383Z" fill="rgba(0,0,0,0.4)"/></svg>
<span class="t" style="left:283.60px;top:178.30px;font-size:20px;line-height:24px;font-weight:bold;color:#00397b;letter-spacing:-0.03px">Likwidacja zasobów</span>
<svg class="abs" style="left:770.00px;top:153.00px" width="90" height="45" viewBox="1090 322 90 45" fill="none" stroke="#4150a6"><polygon points="1097.6,344.45 1105.6,330.1 1122.6,330.1 1130.6,344.45 1122.6,358.8 1105.6,358.8" stroke-width="4.1"/><g fill="#4150a6" stroke="none"><path d="M1136.7 328 H1142.7 L1150.6 340.4 V343.9 H1146.3Z M1146.3 344.9 H1150.6 V348.4 L1142.7 361 H1136.7Z M1171.2 328 H1165.2 L1157 340.4 V343.9 H1161.4Z M1161.4 344.9 H1157 V348.4 L1165.2 361 H1171.2Z"/></g></svg>
<div class="abs" style="left:737.30px;top:199.00px;width:152.20px;height:19.50px;overflow:hidden"><span class="t" style="left:0;top:1px;width:152.2px;text-align:center;font-weight:bold;line-height:15.3px;white-space:normal;padding-left:2.6px">Infonet Projekt<br>Sp.</span></div>
<div class="abs" style="left:171.00px;top:225.30px;width:719.60px;height:3.50px;background:#5e5e5e"></div>
<div class="abs" style="left:171.00px;top:228.80px;width:719.60px;height:0.80px;background:#b0b0b0"></div>
<svg class="abs" style="left:171.00px;top:278.00px" width="20" height="20" viewBox="0 0 20 20" fill="none" stroke-width="2.6"><path d="M15.4 4.6 L3.8 16" stroke="#999" stroke-width="2.8"/><path d="M3.8 4.6 L15.4 16" stroke="#000" stroke-width="3"/></svg>
<span class="t" style="left:205.60px;top:279.50px;letter-spacing:-0.04px">Likwidowany zakres</span>
<div class="abs" style="left:171.00px;top:307.10px;width:717.80px;height:27.90px;background:#d0d0d0"></div>
<div class="abs" style="left:198.80px;top:311.50px;width:1.00px;height:19.50px;background:#dedede"></div>
<div class="abs" style="left:397.00px;top:311.50px;width:1.00px;height:19.50px;background:#dedede"></div>
<div class="abs" style="left:538.90px;top:311.50px;width:1.00px;height:19.50px;background:#dedede"></div>
<div class="abs" style="left:661.25px;top:311.50px;width:1.00px;height:19.50px;background:#dedede"></div>
<div class="abs" style="left:783.75px;top:311.50px;width:1.00px;height:19.50px;background:#dedede"></div>
<span class="t" style="left:179.50px;top:316.20px;font-size:11px;line-height:14px;font-weight:bold;letter-spacing:-0.2px">Lp.</span>
<span class="t" style="left:205.90px;top:314.50px;font-weight:bold">Nazwa</span>
<span class="t" style="left:404.10px;top:314.50px;font-weight:bold">Model</span>
<span class="t" style="left:546.00px;top:314.50px;font-weight:bold">S/N</span>
<span class="t" style="left:668.35px;top:314.50px;font-weight:bold">Nr inw.</span>
<span class="t" style="left:790.85px;top:314.50px;font-weight:bold">Data</span>
<div class="abs" style="left:171.20px;top:351.00px;width:29.80px;height:25.00px;overflow:hidden"><span class="t" style="left:6.2px;top:6.5px">[Row#]</span></div>
<div class="abs" style="left:199.30px;top:351.00px;width:198.80px;height:25.00px;overflow:hidden"><span class="t" style="left:6.6px;top:6.5px">[Assets.Name]</span></div>
<div class="abs" style="left:397.50px;top:351.00px;width:142.50px;height:25.00px;overflow:hidden"><span class="t" style="left:6.6px;top:6.5px">[Assets.Model]</span></div>
<div class="abs" style="left:539.40px;top:351.00px;width:122.95px;height:25.00px;overflow:hidden"><span class="t" style="left:6.6px;top:6.5px">[Assets.SerialNo]</span></div>
<div class="abs" style="left:661.75px;top:351.00px;width:126.10px;height:25.00px;overflow:hidden"><span class="t" style="left:6.6px;top:6.5px">[Assets.InventoryNo]</span></div>
<div class="abs" style="left:784.25px;top:351.00px;width:106.15px;height:25.00px;overflow:hidden"><span class="t" style="left:6.6px;top:6.5px">[FormatDateTime([Assets.Date])]</span></div>
<div class="abs" style="left:576.80px;top:467.40px;width:97.60px;height:18.60px;overflow:hidden"><span class="t" style="left:6.9px;top:1.4px;font-style:italic">[FormatDateTime</span></div>
<div class="abs" style="left:581.00px;top:485.70px;width:303.80px;height:1.10px;background:#111"></div>
<span class="t" style="left:711.30px;top:492.20px;font-size:10.67px;line-height:13px">(podpis)</span>
<div class="abs" style="left:180.00px;top:523.90px;width:717.80px;height:1.00px;background:#555"></div>
<span class="t" style="left:186.60px;top:535.30px;">Oxari</span>
<div class="abs" style="left:454.40px;top:533.40px;width:255.40px;height:19.20px;overflow:hidden"><span class="t" style="left:6.5px;top:-4.7px;line-height:15.3px;white-space:normal;width:240px;letter-spacing:-0.12px">[FormatDateTime([Date], "dd.MM.yyyy<br>HH:mm:ss")]</span></div>
<svg class="abs" style="left:444.00px;top:536.50px" width="12" height="12" viewBox="0 0 12 12"><rect x="0.6" y="0.6" width="10.6" height="10.6" rx="1.6" fill="none" stroke="#e08a8a" stroke-width="1"/><rect x="3" y="1.6" width="5.8" height="2.6" fill="#fff" stroke="#777" stroke-width="0.8"/><rect x="1.4" y="4.2" width="9" height="3.6" fill="#8a8a8a"/><rect x="3" y="7" width="5.8" height="3.4" fill="#fff" stroke="#777" stroke-width="0.8"/></svg>
<div class="abs" style="left:756.10px;top:533.40px;width:72.50px;height:19.20px;overflow:hidden"><span class="t" style="right:0.6px;top:1.9px;letter-spacing:-0.18px">Strona:</span></div>
<div class="abs" style="left:833.60px;top:533.40px;width:17.40px;height:19.20px;overflow:hidden"><span class="t" style="right:3.2px;top:1.9px">[Page]</span></div>
<span class="t" style="left:857.00px;top:535.30px;">/</span>
<div class="abs" style="left:861.10px;top:533.40px;width:29.80px;height:19.20px;overflow:hidden"><span class="t" style="left:5.2px;top:1.9px">[TotalPages]</span></div>
<svg class="abs" style="left:0;top:0" width="1000" height="600" fill="none" stroke="#cd5c5c" stroke-width="1.2" stroke-opacity="0.9"><path d="M189.3 165.6V161.2H193.7M242.4 161.2H246.8V165.6M189.3 214.1V218.5H193.7M242.4 218.5H246.8V214.1M170.6 174.9V170.5H175.0M261.6 170.5H266.0V174.9M170.6 185.6V190.0H175.0M261.6 190.0H266.0V185.6M274.3 156.3V151.9H278.7M666.9 151.9H671.2V156.3M274.3 223.2V227.6H278.7M666.9 227.6H671.2V223.2M775.2 156.3V151.9H779.6M847.0 151.9H851.4V156.3M775.2 195.0V199.4H779.6M847.0 199.4H851.4V195.0M737.3 203.4V199.0H741.7M885.1 199.0H889.5V203.4M737.3 214.1V218.5H741.7M885.1 218.5H889.5V214.1M171.2 282.9V278.5H175.6M186.1 278.5H190.5V282.9M171.2 293.3V297.7H175.6M186.1 297.7H190.5V293.3M199.1 282.9V278.5H203.5M346.5 278.5H350.9V282.9M199.1 293.3V297.7H203.5M346.5 297.7H350.9V293.3M171.2 311.5V307.1H175.6M194.9 307.1H199.3V311.5M171.2 330.8V335.2H175.6M194.9 335.2H199.3V330.8M171.2 349.1V344.7H175.6M194.9 344.7H199.3V349.1M171.2 378.4V382.8H175.6M194.9 382.8H199.3V378.4M199.3 311.5V307.1H203.7M393.1 307.1H397.5V311.5M199.3 330.8V335.2H203.7M393.1 335.2H397.5V330.8M199.3 349.1V344.7H203.7M393.1 344.7H397.5V349.1M199.3 378.4V382.8H203.7M393.1 382.8H397.5V378.4M397.5 311.5V307.1H401.9M535.0 307.1H539.4V311.5M397.5 330.8V335.2H401.9M535.0 335.2H539.4V330.8M397.5 349.1V344.7H401.9M535.0 344.7H539.4V349.1M397.5 378.4V382.8H401.9M535.0 382.8H539.4V378.4M539.4 311.5V307.1H543.8M657.4 307.1H661.8V311.5M539.4 330.8V335.2H543.8M657.4 335.2H661.8V330.8M539.4 349.1V344.7H543.8M657.4 344.7H661.8V349.1M539.4 378.4V382.8H543.8M657.4 382.8H661.8V378.4M661.8 311.5V307.1H666.1M779.9 307.1H784.2V311.5M661.8 330.8V335.2H666.1M779.9 335.2H784.2V330.8M661.8 349.1V344.7H666.1M779.9 344.7H784.2V349.1M661.8 378.4V382.8H666.1M779.9 382.8H784.2V378.4M784.2 311.5V307.1H788.6M884.4 307.1H888.8V311.5M784.2 330.8V335.2H788.6M884.4 335.2H888.8V330.8M784.2 349.1V344.7H788.6M884.4 344.7H888.8V349.1M784.2 378.4V382.8H788.6M884.4 382.8H888.8V378.4M576.8 471.8V467.4H581.2M667.2 467.4H671.6V471.8M576.8 481.6V486.0H581.2M667.2 486.0H671.6V481.6M576.8 495.1V490.7H581.2M875.5 490.7H879.9V495.1M576.8 505.8V510.2H581.2M875.5 510.2H879.9V505.8M180.0 537.9V533.5H184.4M299.0 533.5H303.4V537.9M180.0 548.1V552.5H184.4M299.0 552.5H303.4V548.1M454.4 537.6V533.2H458.8M705.4 533.2H709.8V537.6M454.4 548.5V552.9H458.8M705.4 552.9H709.8V548.5M756.1 537.6V533.2H760.5M827.7 533.2H832.1V537.6M756.1 548.2V552.6H760.5M827.7 552.6H832.1V548.2M832.1 537.6V533.2H836.5M847.0 533.2H851.4V537.6M832.1 548.2V552.6H836.5M847.0 552.6H851.4V548.2M851.4 537.6V533.2H855.8M856.7 533.2H861.1V537.6M851.4 548.2V552.6H855.8M856.7 552.6H861.1V548.2M861.1 537.6V533.2H865.5M885.1 533.2H889.5V537.6M861.1 548.2V552.6H865.5M885.1 552.6H889.5V548.2"/></svg>
<svg class="abs" style="left:0;top:0" width="600" height="300"><defs><clipPath id="gc"><rect x="352" y="225.60000000000002" width="112" height="46"/></clipPath></defs><g fill="#c0504d"><circle cx="360" cy="246.25" r="5"/><circle cx="407" cy="246.25" r="5"/><circle cx="454.5" cy="246.25" r="5"/><circle cx="360" cy="265.1" r="5"/><circle cx="407" cy="265.1" r="5"/><circle cx="454.5" cy="265.1" r="5"/><circle cx="407" cy="227.39999999999998" r="5" clip-path="url(#gc)"/><rect x="406.29999999999995" y="231" width="1.5" height="11"/></g></svg>
<div class="abs" style="left:347.90px;top:221.30px;width:119.60px;height:54.30px;border:4.2px solid #8fd444;border-radius:7px;box-shadow:0 2px 4px rgba(0,0,0,.35), inset 0 1px 4px rgba(0,0,0,.4)"></div>
<!--/CANVAS-->
<div id="lp"></div>
<!--LP-->
<div class="abs" style="left:39.00px;top:128.00px;width:7px;height:630px;background:#2a5292;border-radius:0 4px 0 0"></div>
<svg class="abs" style="left:12.00px;top:150.00px" width="12" height="11" viewBox="0 0 12 11" shape-rendering="crispEdges"><rect width="12" height="11" fill="#e9edf8"/><g fill="#111"><rect x="1.5" y="1.5" width="2" height="1.4"/><rect x="1.5" y="3.9" width="2" height="1.4"/><rect x="1.5" y="6.2" width="2" height="1.4"/><rect x="1.5" y="8.5" width="2" height="1.4"/></g><g fill="#7d8391"><rect x="4.8" y="1.6" width="5.8" height="1.1"/><rect x="4.8" y="4" width="5.8" height="1.1"/><rect x="4.8" y="6.3" width="5.8" height="1.1"/><rect x="4.8" y="8.6" width="5.8" height="1.1"/></g></svg>
<svg class="abs" style="left:13.40px;top:195.40px" width="11" height="13" viewBox="0 0 11 13"><path d="M10.6 0.4 L3.7 1 L0.4 7 L4.5 6.6 L1.6 12.6 L9.9 4.7 L6.6 5.1Z" fill="#f8b84a" stroke="#d98a1c" stroke-width="0.7"/><path d="M8.8 1.2 L4 2.2 L2 5.4 L5.6 5Z" fill="#ffe38a"/></svg>
<svg class="abs" style="left:13.60px;top:239.60px" width="11" height="16" viewBox="0 0 11 16"><path d="M2.3 4 V13.4 H6 M2.3 7.4 H6" fill="none" stroke="#b7a98a" stroke-width="0.9"/><rect x="0.2" y="0.2" width="4.2" height="4" fill="#8db4ee" stroke="#5f8fd8" stroke-width="0.5"/><rect x="6.1" y="5.1" width="4.3" height="4.2" fill="#5cb85c" stroke="#3f9b3f" stroke-width="0.5"/><rect x="6.1" y="11" width="4.3" height="4.2" fill="#5cb85c" stroke="#3f9b3f" stroke-width="0.5"/></svg>
<svg class="abs" style="left:11.60px;top:286.40px" width="13" height="15" viewBox="0 0 13 15"><defs><linearGradient id="dbg" x1="0" x2="1"><stop offset="0" stop-color="#fff4c8"/><stop offset="0.55" stop-color="#f4c33c"/><stop offset="1" stop-color="#fde9a6"/></linearGradient></defs><path d="M0.8 3 C0.8 0.2 12.2 0.2 12.2 3 V12 C12.2 14.8 0.8 14.8 0.8 12Z" fill="url(#dbg)" stroke="#eaa100" stroke-width="1.3"/><ellipse cx="6.5" cy="3.1" rx="4.6" ry="1.5" fill="#fffdf2"/></svg>
<svg class="abs" style="left:12.60px;top:331.20px" width="17" height="17" viewBox="0 0 17 17"><defs><linearGradient id="pg2" x1="0" y1="0" x2="1" y2="1"><stop offset="0" stop-color="#f6f7fc"/><stop offset="1" stop-color="#cfd4e8"/></linearGradient></defs><path d="M0.6 0.6 H7 L10 3.4 V12 H0.6Z" fill="url(#pg2)" stroke="#b9c0d8" stroke-width="0.7"/><path d="M6.6 5 H13 L16 7.8 V16.2 H6.6Z" fill="url(#pg2)" stroke="#b9c0d8" stroke-width="0.7"/></svg>
<svg class="abs" style="left:9.80px;top:611.00px" width="18" height="20"><path d="M0 0 L17 10 L0 20Z" fill="#5c80b8"/></svg>
<!--/LP-->
</div>
<!--/DESIGNER-->
<div id="sb"><div class="th"></div>
<svg class="abs" style="left:4px;top:6px" width="9" height="5"><path d="M0 5 L4.5 0 L9 5Z" fill="#a3a3a3"/></svg>
<svg class="abs" style="left:4px;top:908px" width="9" height="5"><path d="M0 0 L9 0 L4.5 5Z" fill="#505050"/></svg>
</div>
</body>
</html>
